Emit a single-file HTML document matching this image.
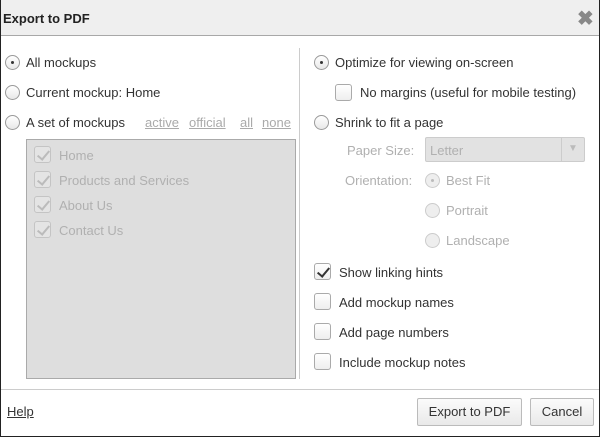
<!DOCTYPE html>
<html><head><style>
*{box-sizing:border-box;margin:0;padding:0}
body{width:600px;height:437px;overflow:hidden;background:#fff;font-family:"Liberation Sans",Arial,sans-serif;font-size:13px;color:#333}
#d{position:absolute;left:0;top:0;width:600px;height:437px;border:1px solid #222;border-top:0;background:#fff}
#t{position:absolute;left:0;top:0;width:598px;height:36px;background:#efefef;border-bottom:1px solid #a8a8a8}
#t b{position:absolute;left:2px;top:11px;font-size:13px;color:#222}
.a{position:absolute;white-space:nowrap}
.r{position:absolute;width:15px;height:15px;border:1px solid #9a9a9a;border-radius:50%;background:linear-gradient(#fff,#e8e8e8)}
.r.on::after{content:"";position:absolute;left:5px;top:5px;width:3px;height:3px;border-radius:50%;background:#333}
.r.dis{border-color:#ccc;background:#eee}
.r.dis.on::after{background:#bbb}
.c{position:absolute;width:17px;height:17px;border:1px solid #aaa;border-radius:3px;background:linear-gradient(#fff,#eee)}
.c.k::after{content:"";position:absolute;left:5px;top:1px;width:5px;height:10px;border:solid #333;border-width:0 2px 2px 0;transform:rotate(40deg)}
.g{color:#b0b0b0}
.c.dk{border-color:#c4c4c4;background:#e4e4e4}
.c.dk::after{content:"";position:absolute;left:5px;top:1px;width:5px;height:10px;border:solid #bbb;border-width:0 2px 2px 0;transform:rotate(40deg)}
.lk{color:#aaa;text-decoration:underline}
.btn{position:absolute;height:28px;border:1px solid #bbb;border-radius:2px;background:linear-gradient(#fbfbfb,#e9e9e9);text-align:center;line-height:26px;font-size:13px;color:#333}
</style></head><body><div id="d">
<div id="t"><b>Export to PDF</b><span class="a" style="left:576px;top:6px;font-size:20px;font-weight:bold;color:#888">✖</span></div>

<div class="r on" style="left:4px;top:55px"></div><span class="a" style="left:25px;top:55px">All mockups</span>
<div class="r" style="left:4px;top:85px"></div><span class="a" style="left:25px;top:85px">Current mockup: Home</span>
<div class="r" style="left:4px;top:115px"></div><span class="a" style="left:25px;top:115px">A set of mockups</span>
<span class="a lk" style="left:144px;top:115px">active</span>
<span class="a lk" style="left:188px;top:115px">official</span>
<span class="a lk" style="left:239px;top:115px">all</span>
<span class="a lk" style="left:261px;top:115px">none</span>
<div class="a" style="left:25px;top:139px;width:270px;height:240px;background:#dedede;border:1px solid #aaa"></div>
<div class="c dk" style="left:33px;top:146px"></div><span class="a g" style="left:58px;top:148px">Home</span>
<div class="c dk" style="left:33px;top:171px"></div><span class="a g" style="left:58px;top:173px">Products and Services</span>
<div class="c dk" style="left:33px;top:196px"></div><span class="a g" style="left:58px;top:198px">About Us</span>
<div class="c dk" style="left:33px;top:221px"></div><span class="a g" style="left:58px;top:223px">Contact Us</span>

<div class="a" style="left:298px;top:48px;width:1px;height:331px;background:#ccc"></div>

<div class="r on" style="left:313px;top:55px"></div><span class="a" style="left:334px;top:55px">Optimize for viewing on-screen</span>
<div class="c" style="left:334px;top:84px"></div><span class="a" style="left:359px;top:85px">No margins (useful for mobile testing)</span>
<div class="r" style="left:313px;top:115px"></div><span class="a" style="left:334px;top:115px">Shrink to fit a page</span>
<span class="a g" style="left:346px;top:143px">Paper Size:</span>
<div class="a" style="left:424px;top:137px;width:160px;height:25px;background:#e2e2e2;border:1px solid #ccc;border-radius:2px"><span class="a g" style="left:4px;top:5px">Letter</span><div class="a" style="left:135px;top:0;width:1px;height:23px;background:#ccc"></div><span class="a" style="left:142px;top:5px;color:#bbb;font-size:10px">▼</span></div>
<span class="a g" style="left:344px;top:173px">Orientation:</span>
<div class="r dis on" style="left:424px;top:173px"></div><span class="a g" style="left:445px;top:173px">Best Fit</span>
<div class="r dis" style="left:424px;top:203px"></div><span class="a g" style="left:445px;top:203px">Portrait</span>
<div class="r dis" style="left:424px;top:233px"></div><span class="a g" style="left:445px;top:233px">Landscape</span>

<div class="c k" style="left:313px;top:263px"></div><span class="a" style="left:338px;top:265px">Show linking hints</span>
<div class="c" style="left:313px;top:293px"></div><span class="a" style="left:338px;top:295px">Add mockup names</span>
<div class="c" style="left:313px;top:323px"></div><span class="a" style="left:338px;top:325px">Add page numbers</span>
<div class="c" style="left:313px;top:353px"></div><span class="a" style="left:338px;top:355px">Include mockup notes</span>

<div class="a" style="left:0;top:389px;width:598px;height:1px;background:#ccc"></div>
<span class="a" style="left:6px;top:404px;text-decoration:underline;color:#333;font-size:13px">Help</span>
<div class="btn" style="left:416px;top:398px;width:105px">Export to PDF</div>
<div class="btn" style="left:529px;top:398px;width:64px">Cancel</div>
</div></body></html>
